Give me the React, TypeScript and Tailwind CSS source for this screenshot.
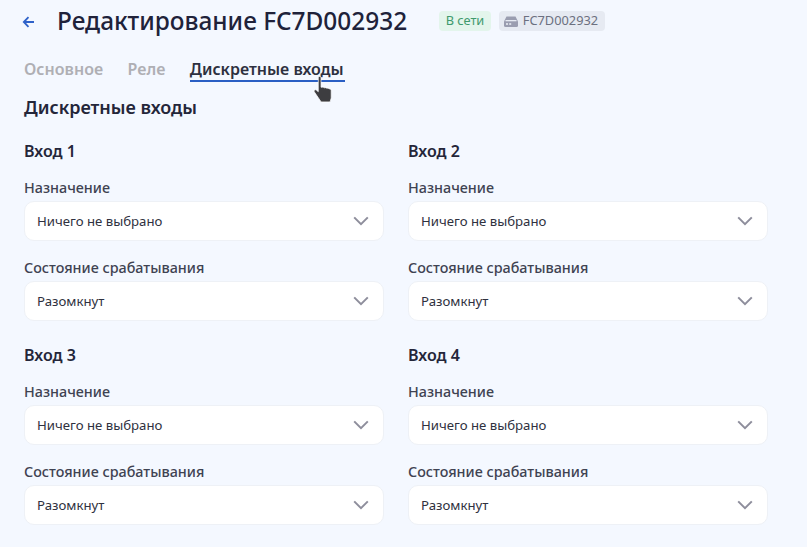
import React from "react";

const Chevron = () => (
  <svg width="16" height="10" viewBox="0 0 16 10" fill="none" className="mb-[1px] shrink-0">
    <path d="M1.2 1.4 L8 8.2 L14.8 1.4" stroke="#8e8e9c" strokeWidth="2" />
  </svg>
);

const Select = ({ value }: { value: string }) => (
  <div className="flex h-[40px] items-center justify-between rounded-[10px] border border-[#eef1f6] bg-white pl-3 pr-[14px] text-[13.2px] text-[#2f3140]">
    <span className="pt-[1px]">{value}</span>
    <Chevron />
  </div>
);

const Field = ({ label, value }: { label: string; value: string }) => (
  <div className="flex flex-col gap-[4px]">
    <div className="h-[19px] text-[14.35px] leading-[19px] font-medium text-[#3f4352]">{label}</div>
    <Select value={value} />
  </div>
);

const Input = ({ title }: { title: string }) => (
  <div className="flex flex-col">
    <div className="mb-[16px] h-[22px] text-[16px] leading-[22px] font-semibold text-[#24263a]">{title}</div>
    <div className="flex flex-col gap-[17px]">
      <Field label="Назначение" value="Ничего не выбрано" />
      <Field label="Состояние срабатывания" value="Разомкнут" />
    </div>
  </div>
);

const Cursor = () => (
  <svg width="28" height="32" viewBox="0 0 24 28" className="absolute left-[310px] top-[74px]">
    <path
      d="M7 3.2c0-1.400 2.400-1.400 2.400 0v8.400l.8-.1c.9-.1 1.600.2 2 .6.8-.3 1.700-.2 2.300.4.9-.3 1.800 0 2.300.7.8-.1 1.500.4 1.500 1.400v6.400l-1 3.400H9.500L3.500 15.600c-.8-1.100.6-2.400 1.700-1.600L7 15.500z"
      fill="#3d3d40"
      stroke="#ffffff"
      strokeWidth="0.6"
    />
  </svg>
);

export default function App() {
  return (
    <div className="relative h-[547px] w-[807px] overflow-hidden bg-[#f4f8ff] font-['Noto_Sans',sans-serif]">
      <div className="flex h-[44px] items-center pb-[4px] pl-[22px]">
        <svg width="13" height="12" viewBox="0 0 13 12" fill="none" className="mr-[22px] mt-[3px]">
          <path d="M12 6H2M6.500 1.200 1.800 6l4.700 4.800" stroke="#2f62c9" strokeWidth="1.800" />
        </svg>
        <div className="text-[24.42px] leading-[33px] font-medium text-[#20223a]">Редактирование FC7D002932</div>
        <div className="ml-[32px] mt-[2px] flex h-[20px] items-center rounded-[4px] bg-[#e3f5ec] px-[6.5px] text-[12.8px] text-[#3f9a6e]">В сети</div>
        <div className="ml-[8px] mt-[2px] flex h-[20px] items-center gap-[4px] rounded-[4px] bg-[#e6eaf2] pl-[4px] pr-[7px] text-[12.8px] text-[#6c7080]">
          <svg width="16" height="13" viewBox="0 0 16 13" fill="none">
            <path d="M3.500 1.500h9L15 6.500v4a1.500 1.500 0 0 1-1.500 1.500h-11A1.500 1.500 0 0 1 1 10.500v-4z" fill="#9a9db0" />
            <rect x="2.500" y="5" width="11" height="1.300" fill="#e6eaf2" />
            <rect x="3" y="8.200" width="2" height="1.600" fill="#e6eaf2" />
            <rect x="6.200" y="8.200" width="2" height="1.600" fill="#e6eaf2" />
          </svg>
          <span>FC7D002932</span>
        </div>
      </div>

      <div className="mt-[14px] flex gap-[24.5px] pl-[24px] text-[16px] leading-[22px] font-semibold">
        <div className="text-[#afafb4]">Основное</div>
        <div className="text-[#afafb4]">Реле</div>
        <div className="h-[24px] border-b-2 border-[#2a5fc4] pr-[1px] text-[#2d3040]">Дискретные входы</div>
      </div>

      <div className="mt-[13px] h-[25px] pl-[24px] text-[18px] leading-[25px] font-semibold text-[#24263a]">Дискретные входы</div>

      <div className="ml-[24px] mt-[20px] grid w-[744px] grid-cols-2 gap-x-[24px] gap-y-[23px]">
        <Input title="Вход 1" />
        <Input title="Вход 2" />
        <Input title="Вход 3" />
        <Input title="Вход 4" />
      </div>
      <Cursor />
    </div>
  );
}
